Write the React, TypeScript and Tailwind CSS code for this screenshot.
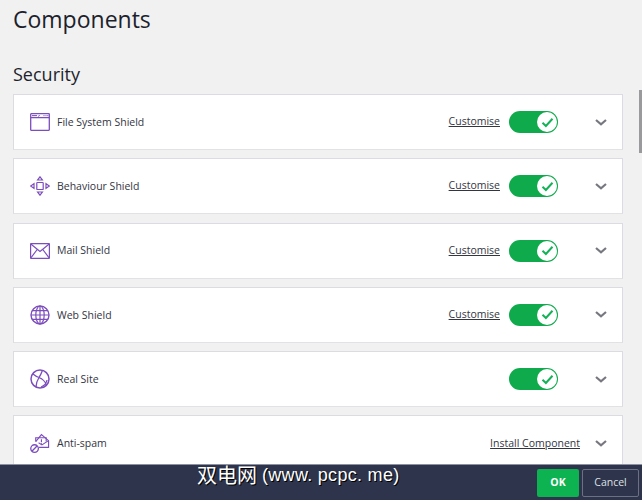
function FileIcon() {
  return (
    <svg width="20" height="18" viewBox="0 0 20 18" fill="none" stroke="#7c4dbd" strokeWidth="1.3">
      <rect x="0.7" y="0.7" width="18.6" height="16.6" rx="0.5" />
      <path d="M0.7 4.600h18.600" />
      <path d="M2 2.600h5M8.500 3.600l1-1.600M13.500 2.600h1M15.500 2.600h1M17.300 2.600h1" strokeWidth="1" />
    </svg>
  );
}

function BehaviourIcon() {
  return (
    <svg width="20" height="20" viewBox="0 0 20 20" fill="none" stroke="#7c4dbd" strokeWidth="1.2">
      <rect x="6.8" y="6.5" width="6.4" height="7" rx="0.6" />
      <path d="M10 0.800l2.400 3.200H7.600zM10 19.200l2.400-3.200H7.600zM0.800 10l3.200-2.400v4.800zM19.200 10L16 7.600v4.800z" />
    </svg>
  );
}

function MailIcon() {
  return (
    <svg width="20" height="16" viewBox="0 0 20 16" fill="none" stroke="#7c4dbd" strokeWidth="1.2">
      <rect x="0.6" y="0.6" width="18.8" height="14.8" rx="0.4" />
      <path d="M0.800 1l9.200 7.500L19.200 1M0.800 15l6.400-8.500M19.200 15l-6.400-8.500" />
    </svg>
  );
}

function WebIcon() {
  return (
    <svg width="20" height="20" viewBox="0 0 20 20" fill="none" stroke="#7c4dbd" strokeWidth="1.2">
      <circle cx="10" cy="10" r="9" strokeWidth="1.4" />
      <ellipse cx="10" cy="10" rx="4.2" ry="9" />
      <path d="M10 1v18M1 10h18M2.200 5.600h15.600M2.200 14.400h15.600" />
    </svg>
  );
}

function RealSiteIcon() {
  return (
    <svg width="20" height="20" viewBox="0 0 20 20" fill="none" stroke="#7c4dbd" strokeWidth="1.3">
      <circle cx="10" cy="10" r="9" strokeWidth="1.5" />
      <path d="M3 5c3 2.500 4.500 3 6 3.500 1.500-2 2.500-4.500 3.500-7.200M9 8.500c-1.600 2.500-3 5.500-3 9.500M9 8.500c3 1.200 6 3.500 7.500 7.500M11 18c3-1.200 5.500-4 6-7" />
    </svg>
  );
}

function SpamIcon() {
  return (
    <svg width="21" height="21" viewBox="0 0 21 21" fill="none" stroke="#7c4dbd" strokeWidth="1.2">
      <path d="M6 8.500L12 1.200l7.500 6.300V14.500H9.500" />
      <path d="M6 8.500V4.500h11V8.500" />
      <path d="M12 6v2.800M12 9.800v1" />
      <path d="M19.500 7.500L12.500 12 9 9.800" />
      <circle cx="4.800" cy="15.800" r="4" strokeWidth="1.400" />
      <path d="M2.200 18.400l5.200-5.200" strokeWidth="1.400" />
    </svg>
  );
}

function Toggle() {
  return (
    <div className="flex h-[22px] w-[49px] items-center justify-end rounded-full bg-[#0eaa4c] pr-[1px]">
      <div className="flex h-[20px] w-[20px] items-center justify-center rounded-full bg-white">
        <svg width="13" height="11" viewBox="0 0 13 11" fill="none" stroke="#14b257" strokeWidth="2">
          <path d="M1.500 5.800l3.400 3.200L11.500 1.800" />
        </svg>
      </div>
    </div>
  );
}

function Chevron() {
  return (
    <svg width="12" height="7" viewBox="0 0 12 7" fill="none" stroke="#77787f" strokeWidth="2.200">
      <path d="M1 1l5 4.300L11 1" />
    </svg>
  );
}

const rows = [
  { name: "File System Shield", icon: <FileIcon />, link: "Customise", toggle: true },
  { name: "Behaviour Shield", icon: <BehaviourIcon />, link: "Customise", toggle: true },
  { name: "Mail Shield", icon: <MailIcon />, link: "Customise", toggle: true },
  { name: "Web Shield", icon: <WebIcon />, link: "Customise", toggle: true },
  { name: "Real Site", icon: <RealSiteIcon />, link: "", toggle: true },
  { name: "Anti-spam", icon: <SpamIcon />, link: "Install Component", toggle: false },
];

export default function App() {
  return (
    <div className="relative flex h-[500px] w-[642px] flex-col overflow-hidden bg-[#f1f1f2] font-['Open_Sans',sans-serif] text-[#2a2d3d]">
      {/* Scrollbar */}
      <div className="absolute right-0 top-[90px] h-[63px] w-[3px] bg-[#9a9a9c]" />

      <div className="flex-1 overflow-hidden pl-[13px] pr-[19px]">
        <h1 className="mt-[3px] text-[23px] leading-[32px] text-[#1d1f2c]">Components</h1>
        <h2 className="mt-[26px] text-[18px] leading-[26px] text-[#1d1f2c]">Security</h2>

        <div className="mt-[7px] flex flex-col gap-[8.3px]">
          {rows.map((row) => (
            <div
              key={row.name}
              className="flex h-[56px] shrink-0 items-center border border-[#dcdbe2] border-b-[#e2e2e4] bg-white pl-[16px] pr-[15px]"
            >
              <div className="flex w-[20px] items-center justify-center">{row.icon}</div>
              <span className="ml-[7px] mt-[1px] text-[10.500px] text-[#33353f]">{row.name}</span>
              <div className="ml-auto flex items-center">
                {row.link && (
                  <a className={`text-[10.500px] text-[#33353f] underline ${row.toggle ? "mr-[9px]" : "mr-[15px]"}`}>
                    {row.link}
                  </a>
                )}
                {row.toggle && <Toggle />}
                <div className={row.toggle ? "ml-[37px]" : ""}>
                  <Chevron />
                </div>
              </div>
            </div>
          ))}
        </div>
      </div>

      {/* Footer */}
      <div className="relative flex h-[36px] shrink-0 items-center justify-end gap-[3px] border-t border-[#8c90a0] bg-[#2d344b] pr-[3px]">
        <span className="absolute left-[197px] top-[-1px] flex items-center font-['Liberation_Sans',sans-serif] text-[18px] leading-[22px] text-white [text-shadow:1px_1px_0_#000]">
          <span className="font-['Noto_Sans_CJK_SC',sans-serif] text-[20px]">双电网</span>
          <span className="ml-[5px] tracking-[0.3px]">(www. pcpc. me)</span>
        </span>
        <button className="h-[28px] w-[42px] rounded-[2px] bg-[#0cb350] text-[10.500px] font-bold text-white">OK</button>
        <button className="h-[28px] w-[57px] rounded-[2px] border border-[#6b7082] text-[10.500px] text-[#dfe0e6]">Cancel</button>
      </div>
    </div>
  );
}
